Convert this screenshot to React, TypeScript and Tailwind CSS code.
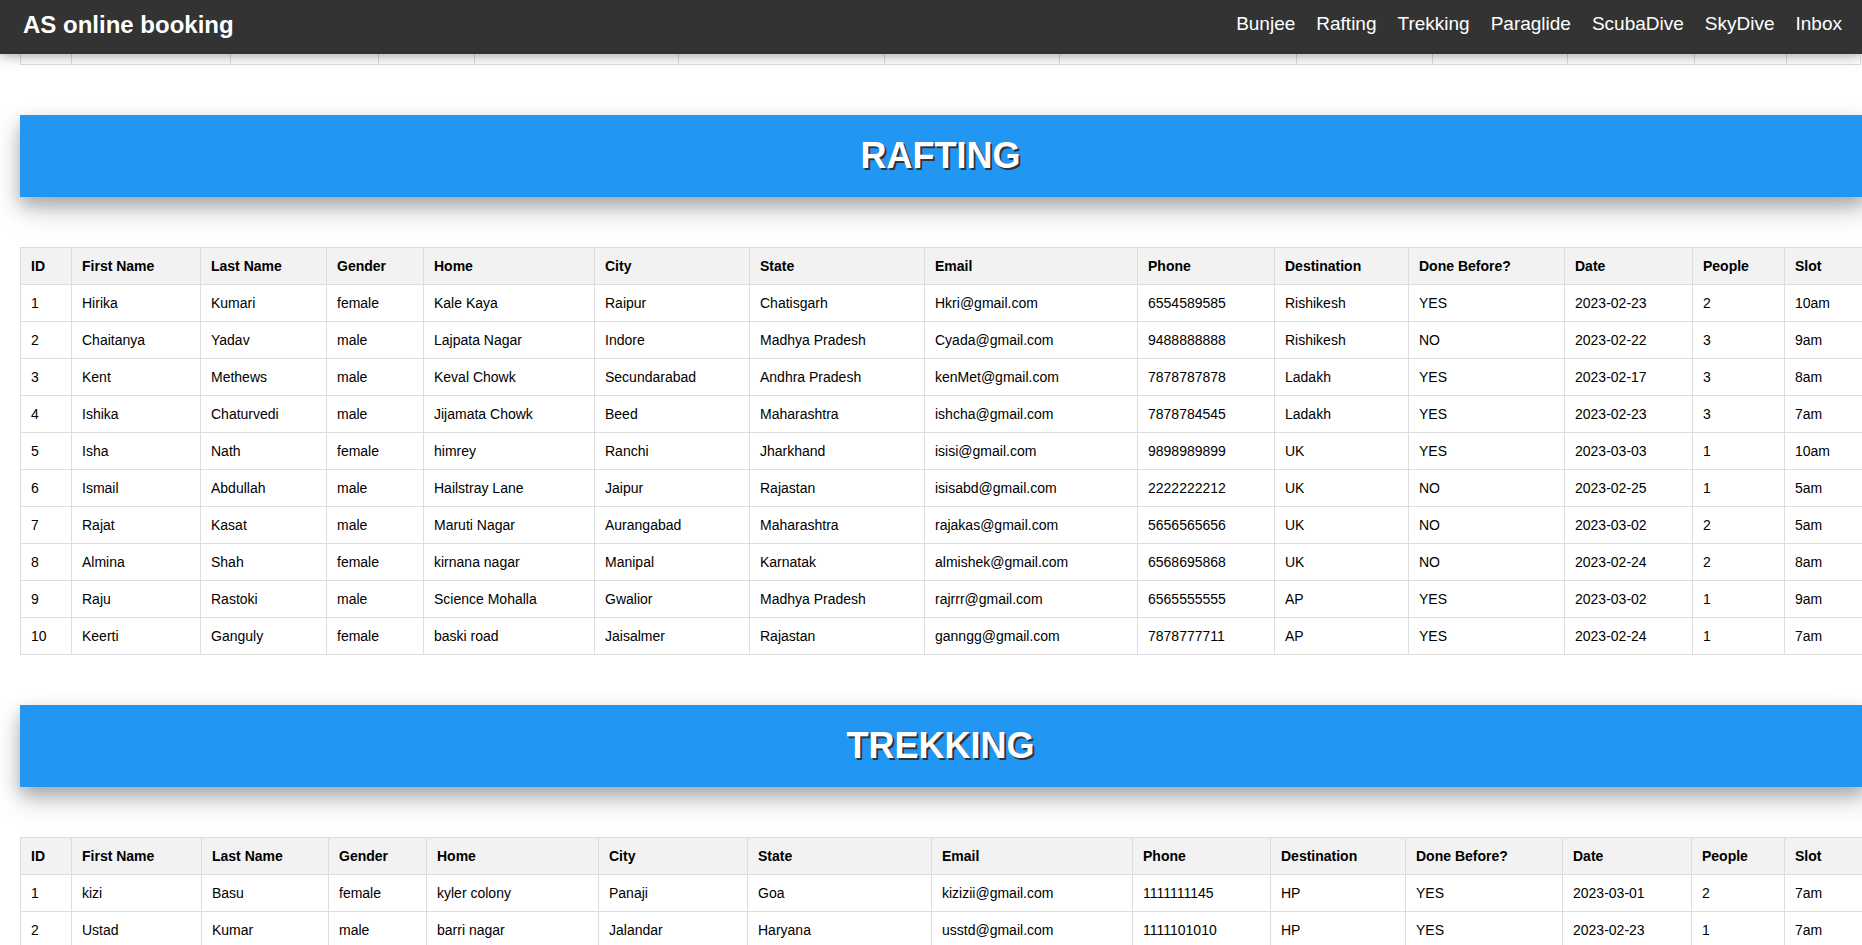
import React from "react";

type Row = string[];

const heads = [
  "ID",
  "First Name",
  "Last Name",
  "Gender",
  "Home",
  "City",
  "State",
  "Email",
  "Phone",
  "Destination",
  "Done Before?",
  "Date",
  "People",
  "Slot",
];

const bunjeeCols = [
  "w-[50px]",
  "w-[159px]",
  "w-[148px]",
  "w-[96px]",
  "w-[204px]",
  "w-[206px]",
  "w-[175px]",
  "w-[237px]",
  "w-[136px]",
  "w-[135px]",
  "w-[127px]",
  "w-[92px]",
  "flex-1",
];

const raftingCols = [
  "w-[51px]",
  "w-[129px]",
  "w-[126px]",
  "w-[97px]",
  "w-[171px]",
  "w-[155px]",
  "w-[175px]",
  "w-[213px]",
  "w-[137px]",
  "w-[134px]",
  "w-[156px]",
  "w-[128px]",
  "w-[92px]",
  "",
];

const trekkingCols = [
  "w-[51px]",
  "w-[130px]",
  "w-[127px]",
  "w-[98px]",
  "w-[172px]",
  "w-[149px]",
  "w-[184px]",
  "w-[201px]",
  "w-[138px]",
  "w-[135px]",
  "w-[157px]",
  "w-[129px]",
  "w-[93px]",
  "",
];

const rafting: Row[] = [
  ["1", "Hirika", "Kumari", "female", "Kale Kaya", "Raipur", "Chatisgarh", "Hkri@gmail.com", "6554589585", "Rishikesh", "YES", "2023-02-23", "2", "10am"],
  ["2", "Chaitanya", "Yadav", "male", "Lajpata Nagar", "Indore", "Madhya Pradesh", "Cyada@gmail.com", "9488888888", "Rishikesh", "NO", "2023-02-22", "3", "9am"],
  ["3", "Kent", "Methews", "male", "Keval Chowk", "Secundarabad", "Andhra Pradesh", "kenMet@gmail.com", "7878787878", "Ladakh", "YES", "2023-02-17", "3", "8am"],
  ["4", "Ishika", "Chaturvedi", "male", "Jijamata Chowk", "Beed", "Maharashtra", "ishcha@gmail.com", "7878784545", "Ladakh", "YES", "2023-02-23", "3", "7am"],
  ["5", "Isha", "Nath", "female", "himrey", "Ranchi", "Jharkhand", "isisi@gmail.com", "9898989899", "UK", "YES", "2023-03-03", "1", "10am"],
  ["6", "Ismail", "Abdullah", "male", "Hailstray Lane", "Jaipur", "Rajastan", "isisabd@gmail.com", "2222222212", "UK", "NO", "2023-02-25", "1", "5am"],
  ["7", "Rajat", "Kasat", "male", "Maruti Nagar", "Aurangabad", "Maharashtra", "rajakas@gmail.com", "5656565656", "UK", "NO", "2023-03-02", "2", "5am"],
  ["8", "Almina", "Shah", "female", "kirnana nagar", "Manipal", "Karnatak", "almishek@gmail.com", "6568695868", "UK", "NO", "2023-02-24", "2", "8am"],
  ["9", "Raju", "Rastoki", "male", "Science Mohalla", "Gwalior", "Madhya Pradesh", "rajrrr@gmail.com", "6565555555", "AP", "YES", "2023-03-02", "1", "9am"],
  ["10", "Keerti", "Ganguly", "female", "baski road", "Jaisalmer", "Rajastan", "ganngg@gmail.com", "7878777711", "AP", "YES", "2023-02-24", "1", "7am"],
];

const trekking: Row[] = [
  ["1", "kizi", "Basu", "female", "kyler colony", "Panaji", "Goa", "kizizii@gmail.com", "1111111145", "HP", "YES", "2023-03-01", "2", "7am"],
  ["2", "Ustad", "Kumar", "male", "barri nagar", "Jalandar", "Haryana", "usstd@gmail.com", "1111101010", "HP", "YES", "2023-02-23", "1", "7am"],
];

const navItems = ["Bunjee", "Rafting", "Trekking", "Paraglide", "ScubaDive", "SkyDive", "Inbox"];

const BookingTable = ({ rows, cols }: { rows: Row[]; cols: string[] }) => {
  return (
    <table className="ml-[20px] w-[1846px] table-fixed border-collapse text-[14px] leading-[16px] text-black">
      <colgroup>
        {cols.map((c, i) => (
          <col key={i} className={c} />
        ))}
      </colgroup>
      <thead>
        <tr className="bg-[#f2f2f2]">
          {heads.map((h) => (
            <th key={h} className="border border-[#ddd] p-[10px] text-left font-bold whitespace-nowrap">
              {h}
            </th>
          ))}
        </tr>
      </thead>
      <tbody>
        {rows.map((row, i) => (
          <tr key={i}>
            {row.map((cell, j) => (
              <td key={j} className="border border-[#ddd] p-[10px] whitespace-nowrap">
                {cell}
              </td>
            ))}
          </tr>
        ))}
      </tbody>
    </table>
  );
};

const Banner = ({ title }: { title: string }) => {
  return (
    <h1 className="mt-[50px] ml-[20px] w-[1846px] bg-[#2196f3] py-[20px] pr-[5px] text-center text-[36px] leading-[42px] font-bold text-white [text-shadow:2px_2px_0_#333] shadow-[0_8px_16px_rgba(0,0,0,0.25),0_14px_30px_rgba(0,0,0,0.15)]">
      {title}
    </h1>
  );
};

const App = () => {
  return (
    <div className="h-[945px] w-full overflow-hidden bg-white font-['Liberation_Sans',Arial,sans-serif]">
      <header className="relative z-10 flex h-[54px] items-center justify-between bg-[#333] pb-[5px] pl-[23px] pr-[20px] shadow-[0_2px_12px_rgba(0,0,0,0.35)]">
        <div className="text-[24px] font-bold text-white">AS online booking</div>
        <nav className="flex gap-[21px] text-[19px] text-white">
          {navItems.map((item) => (
            <a key={item} href="#" className="text-white">
              {item}
            </a>
          ))}
        </nav>
      </header>

      {/* tail end of the Bunjee table, scrolled under the header */}
      <div className="ml-[20px] flex h-[11px] w-[1841px] border-x border-b border-[#ddd]">
        {bunjeeCols.map((c, i) => (
          <div key={i} className={`${c} ${i > 0 ? "border-l border-[#ddd]" : ""}`} />
        ))}
      </div>

      <Banner title="RAFTING" />
      <div className="mt-[50px]">
        <BookingTable rows={rafting} cols={raftingCols} />
      </div>

      <Banner title="TREKKING" />
      <div className="mt-[50px]">
        <BookingTable rows={trekking} cols={trekkingCols} />
      </div>
    </div>
  );
};

export default App;
